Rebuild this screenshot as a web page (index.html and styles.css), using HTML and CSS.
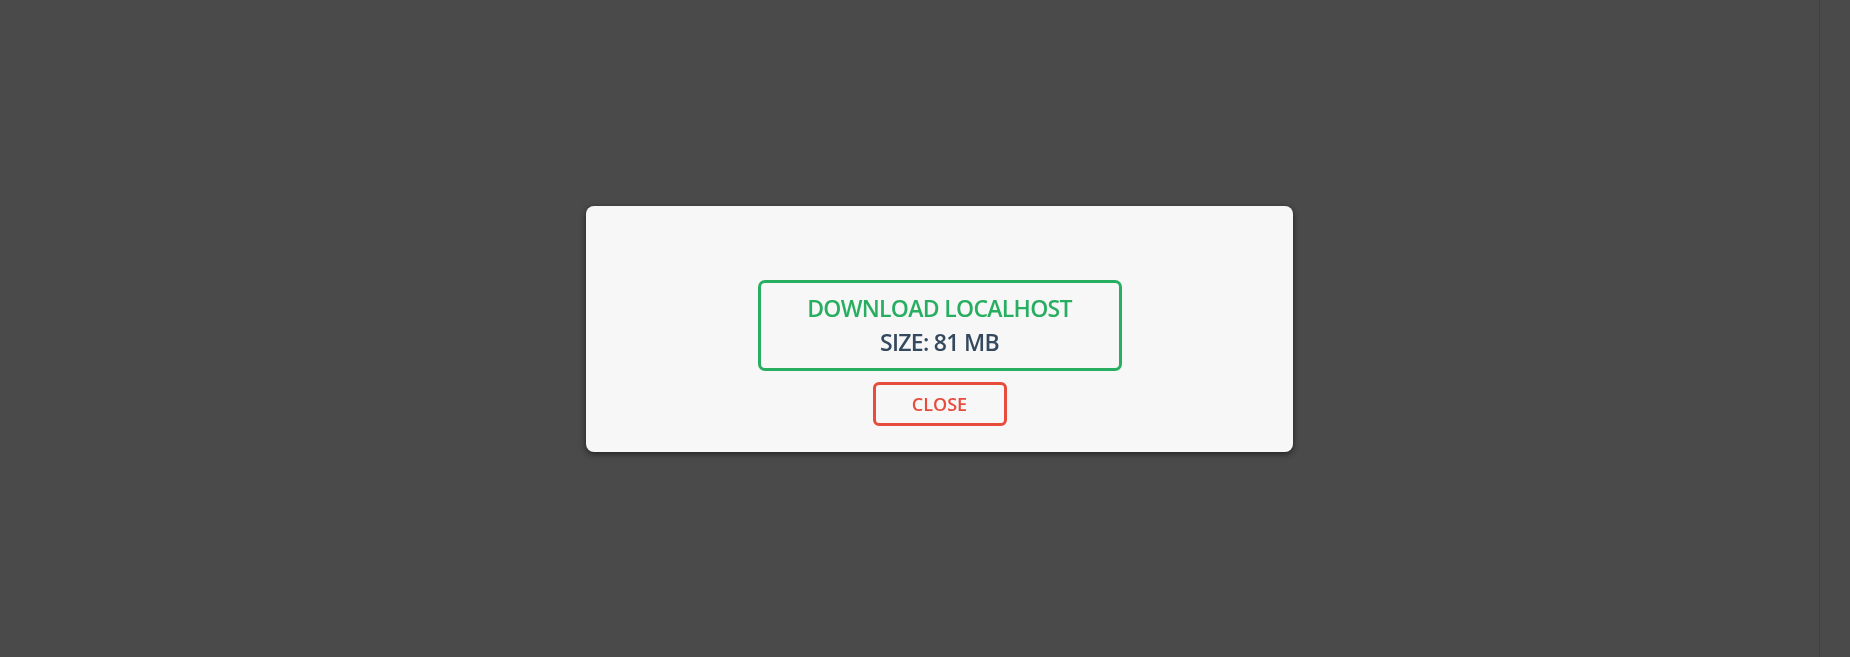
FILE: index.html
```html
<!DOCTYPE html>
<html lang="en">
<head>
<meta charset="utf-8">
<title>Download</title>
<link rel="stylesheet" href="styles.css">
</head>
<body>
<div class="page">
  <main class="content"></main>
  <div class="scroll-track"></div>
</div>
<div class="overlay">
  <div class="modal">
    <button class="download-btn" type="button">
      <span class="download-title">DOWNLOAD LOCALHOST</span>
      <span class="download-size">SIZE: 81 MB</span>
    </button>
    <button class="close-btn" type="button">CLOSE</button>
  </div>
</div>
</body>
</html>
```

FILE: styles.css
```css
html, body {
  margin: 0;
  padding: 0;
  height: 100%;
}

body {
  background: #4a4a4a;
  font-family: "Open Sans", "Noto Sans", "Liberation Sans", sans-serif;
  overflow: hidden;
}

.page {
  display: flex;
  height: 100vh;
}

.content {
  flex: 1;
}

.scroll-track {
  width: 30px;
  border-left: 1px solid #414141;
  background: #4a4a4a;
}

.overlay {
  position: fixed;
  inset: 0;
  display: flex;
  align-items: center;
  justify-content: center;
  padding-left: 29px;
}

.modal {
  width: 707px;
  height: 246px;
  box-sizing: border-box;
  background: #f7f7f7;
  border-radius: 8px;
  box-shadow: 0 2px 6px rgba(0, 0, 0, 0.55);
  display: flex;
  flex-direction: column;
  align-items: center;
  padding-top: 74px;
  gap: 11px;
}

.download-btn {
  width: 364px;
  height: 91px;
  box-sizing: border-box;
  border: 3px solid #27ae60;
  border-radius: 7px;
  background: transparent;
  display: flex;
  flex-direction: column;
  align-items: center;
  justify-content: center;
  padding: 0;
  font-family: inherit;
  font-weight: 600;
  font-size: 23px;
  letter-spacing: -0.7px;
  line-height: 34px;
  cursor: pointer;
}

.download-title {
  color: #27ae60;
}

.download-size {
  color: #34495e;
}

.close-btn {
  width: 134px;
  height: 44px;
  box-sizing: border-box;
  border: 3px solid #e74c3c;
  border-radius: 6px;
  background: transparent;
  color: #e74c3c;
  font-family: inherit;
  font-weight: 600;
  font-size: 18px;
  line-height: 38px;
  padding: 0;
  cursor: pointer;
}
```
